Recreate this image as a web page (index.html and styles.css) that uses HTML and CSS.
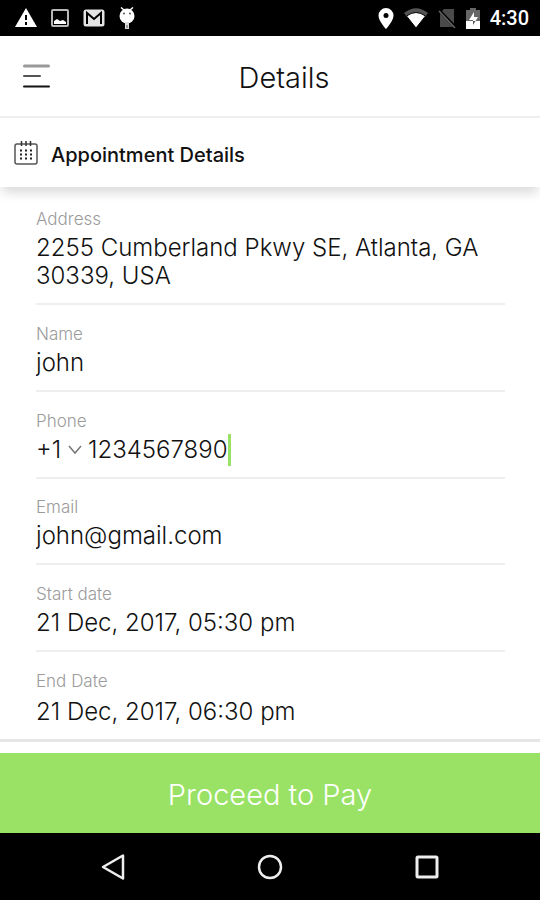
FILE: index.html
```html
<!DOCTYPE html>
<html lang="en">
<head>
<meta charset="utf-8">
<meta name="viewport" content="width=device-width, initial-scale=1">
<title>Details</title>
<link rel="stylesheet" href="styles.css">
</head>
<body>
<div class="screen">
  <div class="status">
    <div class="status-left">
      <svg width="22" height="20" viewBox="0 0 22 20"><path d="M11 0 22 19H0z" fill="#fff"/><path d="M11 7v5M11 14v3" stroke="#000" stroke-width="2"/></svg>
      <svg width="18" height="18" viewBox="0 0 18 18"><rect x="1" y="1" width="16" height="16" rx="1" fill="none" stroke="#b8b8b8" stroke-width="2"/><path d="M3 15v-3l3-2 3 2 3-1 3 2v2z" fill="#fff"/></svg>
      <svg width="22" height="18" viewBox="0 0 22 18"><rect x=".5" y=".5" width="21" height="17" rx="2.500" fill="#e4e4e4"/><path d="M4 15V4l7 6 7-6v11" fill="none" stroke="#000" stroke-width="2"/></svg>
      <svg width="16" height="22" viewBox="0 0 16 22"><circle cx="8" cy="9" r="7.500" fill="#fff"/><path d="M5 3 2 .500M11 3l3-2.500" stroke="#fff" stroke-width="1.500"/><path d="M8 15v7" stroke="#ddd" stroke-width="4"/><path d="M8 18v3" stroke="#555" stroke-width="1"/><circle cx="5" cy="6.500" r="1" fill="#555"/><circle cx="11" cy="6.500" r="1" fill="#555"/></svg>
    </div>
    <div class="status-right">
      <svg width="16" height="21" viewBox="0 0 16 21"><path d="M8 0a7.500 7.500 0 0 0-7.500 7.500C.5 13 8 21 8 21s7.500-8 7.500-13.500A7.500 7.500 0 0 0 8 0z" fill="#fff"/><circle cx="8" cy="7.500" r="2.500" fill="#000"/></svg>
      <svg width="24" height="20" viewBox="0 0 24 20"><path d="M0 5Q12-4.500 24 5L12 20z" fill="#555"/><path d="M2.500 8Q12 1 21.500 8L12 20z" fill="#fff" stroke="#000" stroke-width="1"/></svg>
      <svg width="18" height="20" viewBox="0 0 18 20"><path d="M6 1h10v18H2V5z" fill="#4a4a4a"/><path d="m0 1 17 18" stroke="#000" stroke-width="3"/><path d="m1 3 16 17" stroke="#666" stroke-width="1.500"/></svg>
      <svg width="14" height="21" viewBox="0 0 14 21"><path d="M4 0h6v2h4v11H0V2h4z" fill="#666"/><path d="M0 13h14v8H0z" fill="#fff"/><path d="M8 4 3 12h4v5l5-8H8z" fill="#fff"/><path d="M7 13v4l2.500-4z" fill="#555"/></svg>
      <span class="clock">4:30</span>
    </div>
  </div>

  <header class="topbar">
    <button class="menu" type="button" aria-label="Menu">
      <svg width="27" height="24" viewBox="0 0 27 24"><path d="M1.500 2h24" stroke="#999" stroke-width="3" stroke-linecap="round"/><path d="M1 12h16" stroke="#555" stroke-width="2" stroke-linecap="round"/><path d="M1 22.500h25" stroke="#111" stroke-width="2" stroke-linecap="round"/></svg>
    </button>
    <h1>Details</h1>
  </header>

  <div class="section">
    <svg width="24" height="24" viewBox="0 0 24 24"><rect x="1" y="3" width="22" height="20" rx="2" fill="none" stroke="#555" stroke-width="1.500"/><path d="M7.500 0v5M12 0v5M16.500 0v5" stroke="#333" stroke-width="1.500"/><path d="M6 9.500h13M6 13.500h13M6 17.500h13" stroke="#222" stroke-width="2" stroke-dasharray="2 3"/></svg>
    <h2>Appointment Details</h2>
  </div>

  <form class="form">
    <div class="field">
      <label for="address">Address</label>
      <textarea id="address" rows="2">2255 Cumberland Pkwy SE, Atlanta, GA 30339, USA</textarea>
    </div>
    <div class="field">
      <label for="name">Name</label>
      <input id="name" type="text" value="john">
    </div>
    <div class="field">
      <label for="phone">Phone</label>
      <div class="phone">
        <select class="code" aria-label="Country code"><option>+1</option></select>
        <svg class="chevron" width="14" height="10" viewBox="0 0 14 10"><path d="m1 1 6 7 6-7" fill="none" stroke="#777" stroke-width="1.500"/></svg>
        <input id="phone" class="number" type="tel" size="10" value="1234567890">
        <span class="caret"></span>
      </div>
    </div>
    <div class="field">
      <label for="email">Email</label>
      <input id="email" type="email" value="john@gmail.com">
    </div>
    <div class="field">
      <label for="start">Start date</label>
      <input id="start" type="text" value="21 Dec, 2017, 05:30 pm">
    </div>
    <div class="field last">
      <label for="end">End Date</label>
      <input id="end" type="text" value="21 Dec, 2017, 06:30 pm">
    </div>
  </form>

  <button class="pay" type="button">Proceed to Pay</button>

  <nav class="nav">
    <button type="button" aria-label="Back"><svg width="26" height="28" viewBox="0 0 26 28"><path d="M23 2.500v23L3 14z" fill="none" stroke="#eee" stroke-width="2.500" stroke-linejoin="round"/></svg></button>
    <button type="button" aria-label="Home"><svg width="26" height="26" viewBox="0 0 26 26"><circle cx="13" cy="13" r="11" fill="none" stroke="#eee" stroke-width="2.500"/></svg></button>
    <button type="button" aria-label="Recent apps"><svg width="26" height="26" viewBox="0 0 26 26"><rect x="3" y="3" width="20" height="20" rx="1" fill="none" stroke="#eee" stroke-width="3"/></svg></button>
  </nav>
</div>
</body>
</html>
```
FILE: styles.css
```css
* { box-sizing: border-box; }
body { margin: 0; background: #fff; color: #111; font-family: Inter, "Open Sans", sans-serif; }
svg { display: block; flex: none; }
button { border: 0; padding: 0; background: none; font: inherit; }
h1, h2 { margin: 0; }

.screen { display: flex; flex-direction: column; min-height: 100vh; }

.status { display: flex; justify-content: space-between; height: 36px; padding: 0 11px 0 15px; background: #000; }
.status-left { display: flex; align-items: center; gap: 14px; }
.status-right { display: flex; align-items: center; gap: 10px; }
.clock { color: #fff; font: 500 20px/38px Roboto, sans-serif; }

.topbar { display: grid; grid-template-columns: 72px 1fr 44px; align-items: center; height: 82px; border-bottom: 2px solid #eee; }
.menu { width: 27px; margin-left: 23px; }
.topbar h1 { padding-top: 4px; text-align: center; font-size: 29px; line-height: 34px; font-weight: 300; }

.section { display: flex; align-items: center; gap: 13px; height: 69px; padding: 0 14px; box-shadow: 0 8px 10px -2px rgba(0, 0, 0, .14); }
.section h2 { padding-top: 4px; font-size: 20px; line-height: 24px; font-weight: 500; }

.form { display: flex; flex: 1; flex-direction: column; justify-content: space-between; padding-top: 23px; border-bottom: 3px solid #e6e6e6; }
.field { display: flex; flex-direction: column; gap: 6px; margin: 0 35px 0 36px; padding-bottom: 13px; border-bottom: 2px solid #eee; }
.field + .field { padding-top: 19px; }
.field.last { gap: 8px; border-bottom: 0; }
.field label { color: #9b9b9b; font-size: 17px; line-height: 18px; font-weight: 300; }
.field input, .field textarea, .field select {
  display: block; width: 100%; height: 28px; margin: 0; padding: 0; border: 0; border-radius: 0;
  outline: 0; background: none; color: #111; font: 300 24px/28px Inter, "Open Sans", sans-serif;
}
.field > input { width: auto; margin: 0 -2px; padding: 0 2px; }
.field textarea { height: 56px; overflow: hidden; resize: none; }

.phone { display: flex; align-items: center; }
.field .code { width: auto; appearance: none; }
.chevron { margin: 0 6px; }
.field .number { width: auto; field-sizing: content; }
.caret { width: 3px; height: 32px; margin: -2px 0; background: #99e265; }

.pay { height: 80px; margin-top: 11px; padding-top: 4px; background: #99e265; color: #fff; font-size: 29px; line-height: 34px; font-weight: 300; }

.nav { display: flex; justify-content: center; align-items: center; gap: 131px; height: 67px; background: #000; }
```
